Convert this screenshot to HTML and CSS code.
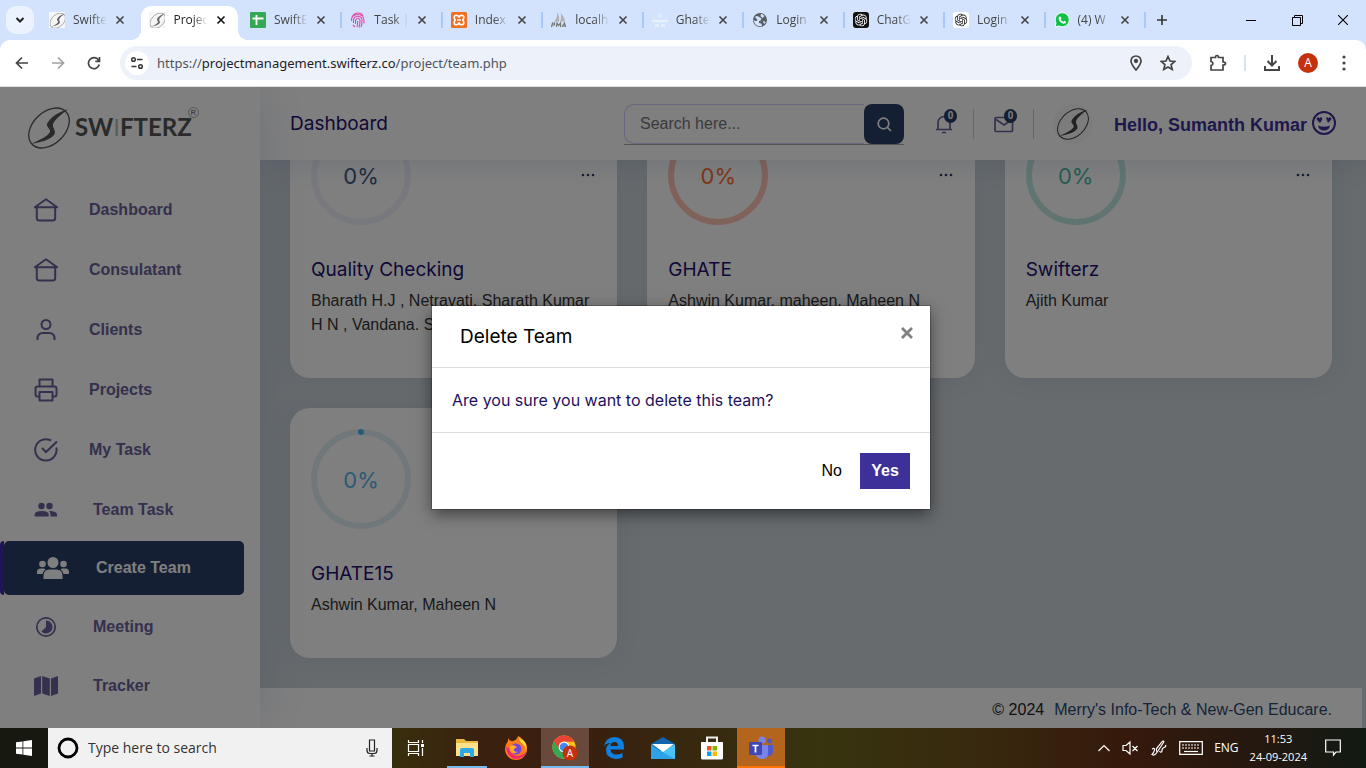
FILE: index.html
```html
<!DOCTYPE html>
<html lang="en">
<head>
<meta charset="utf-8">
<title>Project Management</title>
<link rel="stylesheet" href="styles.css">
</head>
<body>
<svg class="sprite" aria-hidden="true">
  <symbol id="x" viewBox="0 0 10 10"><path d="M1.500 1.500l7 7M8.500 1.500l-7 7" fill="none" stroke="currentColor" stroke-width="1.600"/></symbol>
  <symbol id="mark" viewBox="0 0 42 42"><ellipse cx="21" cy="21" rx="23.500" ry="16" transform="rotate(-44 21 21)" fill="none" stroke="currentColor" stroke-width="1.300"/><path d="M40 2C31 5 22 10 19 17c-1 3 4 5 3 8-3 5-11 8-19 12 10-2 19-4 23-9 3-4-2-7-1-11 2-5 9-10 15-15z" fill="currentColor"/></symbol>
  <symbol id="home" viewBox="0 0 24 24"><path d="M.8 9.200L12 1.200l11.200 8zM2.800 9v11q0 2.500 2.500 2.500h13.400q2.500 0 2.500-2.500V9" fill="none" stroke="currentColor" stroke-width="2" stroke-linejoin="round"/></symbol>
  <symbol id="dots" viewBox="0 0 14 4"><circle cx="2" cy="2" r="1.300"/><circle cx="7" cy="2" r="1.300"/><circle cx="12" cy="2" r="1.300"/></symbol>
  <symbol id="knot" viewBox="0 0 24 24"><path fill="currentColor" d="M22.2819 9.8211a5.9847 5.9847 0 0 0-.5157-4.9108 6.0462 6.0462 0 0 0-6.5098-2.9A6.0651 6.0651 0 0 0 4.9807 4.1818a5.9847 5.9847 0 0 0-3.9977 2.9 6.0462 6.0462 0 0 0 .7427 7.0966 5.98 5.98 0 0 0 .511 4.9107 6.051 6.051 0 0 0 6.5146 2.9001A5.9847 5.9847 0 0 0 13.2599 24a6.0557 6.0557 0 0 0 5.7718-4.2058 5.9894 5.9894 0 0 0 3.9977-2.9001 6.0557 6.0557 0 0 0-.7475-7.0729zm-9.022 12.6081a4.4755 4.4755 0 0 1-2.8764-1.0408l.1419-.0804 4.7783-2.7582a.7948.7948 0 0 0 .3927-.6813v-6.7369l2.02 1.1686a.071.071 0 0 1 .038.052v5.5826a4.504 4.504 0 0 1-4.4945 4.4944zm-9.6607-4.1254a4.4708 4.4708 0 0 1-.5346-3.0137l.142.0852 4.783 2.7582a.7712.7712 0 0 0 .7806 0l5.8428-3.3685v2.3324a.0804.0804 0 0 1-.0332.0615L9.74 19.9502a4.4992 4.4992 0 0 1-6.1408-1.6464zM2.3408 7.8956a4.485 4.485 0 0 1 2.3655-1.9728V11.6a.7664.7664 0 0 0 .3879.6765l5.8144 3.3543-2.0201 1.1685a.0757.0757 0 0 1-.071 0l-4.8303-2.7865A4.504 4.504 0 0 1 2.3408 7.872zm16.5963 3.8558L13.1038 8.364 15.1192 7.2a.0757.0757 0 0 1 .071 0l4.8303 2.7913a4.4944 4.4944 0 0 1-.6765 8.1042v-5.6772a.79.79 0 0 0-.407-.667zm2.0107-3.0231l-.142-.0852-4.7735-2.7818a.7759.7759 0 0 0-.7854 0L9.409 9.2297V6.8974a.0662.0662 0 0 1 .0284-.0615l4.8303-2.7866a4.4992 4.4992 0 0 1 6.6802 4.66zM8.3065 12.863l-2.02-1.1638a.0804.0804 0 0 1-.038-.0567V6.0742a4.4992 4.4992 0 0 1 7.3757-3.4537l-.142.0805L8.704 5.459a.7948.7948 0 0 0-.3927.6813zm1.0976-2.3654l2.602-1.4998 2.6069 1.4998v2.9994l-2.5974 1.4997-2.6067-1.4997Z"/></symbol>
</svg>

<div class="tabstrip">
  <button class="tab-search" aria-label="Search tabs"><svg width="12" height="12" viewBox="0 0 12 12"><path d="M2.500 4L6 7.500 9.500 4" fill="none" stroke="#222" stroke-width="2"/></svg></button>
  <div class="tabs">
    <div class="tab"><svg class="fav fav-white" viewBox="-2 -2 46 46"><use href="#mark"/></svg><span class="tab-title">Swifte</span><button class="tab-x" aria-label="Close tab"><svg><use href="#x"/></svg></button></div>
    <div class="tab active"><svg class="fav fav-white" viewBox="-2 -2 46 46"><use href="#mark"/></svg><span class="tab-title">Projec</span><button class="tab-x" aria-label="Close tab"><svg><use href="#x"/></svg></button></div>
    <div class="tab"><svg class="fav" viewBox="0 0 16 16"><rect width="16" height="16" rx="1" fill="#34a853"/><path d="M2.500 6.500h11M6.500 3v10" stroke="#fff" stroke-width="1.800"/></svg><span class="tab-title">SwiftE</span><button class="tab-x" aria-label="Close tab"><svg><use href="#x"/></svg></button></div>
    <div class="tab"><svg class="fav" viewBox="0 0 16 16" fill="none" stroke="#e048a8" stroke-width="1.100"><path d="M2 5Q4 1 8 1t5 3M1.500 9V8q0-5 6-5.500 7 0 6.500 7v2M3.500 11V8q0-3.500 4.500-3.500T12 9q0 4-1 6M5.500 12V8.500Q6 6.500 8 6.500t2 2q0 4-1 7M7.700 9q0 3-.7 6M3 13l2 2"/></svg><span class="tab-title">Task |</span><button class="tab-x" aria-label="Close tab"><svg><use href="#x"/></svg></button></div>
    <div class="tab"><svg class="fav" viewBox="0 0 16 16"><rect width="16" height="16" rx="1.500" fill="#f07020"/><path d="M8 5.500Q7.500 3.300 5.500 3.200 3.200 3.200 3.200 5.300q0 1.700 1 2.700-1 1-1 2.700 0 2.100 2.300 2.100 2-.1 2.500-2.300.5 2.200 2.500 2.300 2.300 0 2.300-2.100 0-1.700-1-2.700 1-1 1-2.700 0-2.100-2.300-2.100Q8.500 3.300 8 5.500zM6 8h4" fill="none" stroke="#fff" stroke-width="1.600"/></svg><span class="tab-title">Index</span><button class="tab-x" aria-label="Close tab"><svg><use href="#x"/></svg></button></div>
    <div class="tab"><svg class="fav" viewBox="0 0 16 16"><path d="M6 0Q7 6 3 9.500h5q1-4-2-9.500zM9.500 1Q11 6 9 9.500h5Q13 4 9.500 1z" fill="#b0b0b0"/><path d="M.5 15l1-4h2v2h-2M5.500 15l.5-4 1.500 2.500 2-2.500v4M11 15l2.500-4 1 4M11.500 14h3" fill="none" stroke="#777" stroke-width="1.200"/></svg><span class="tab-title">localh</span><button class="tab-x" aria-label="Close tab"><svg><use href="#x"/></svg></button></div>
    <div class="tab"><svg class="fav" viewBox="0 0 16 16" opacity=".7"><path d="M7 2h3v3H7z" fill="#e8f0ff"/><path d="M0 9h16M3 13.500h4M9 13.500h4" stroke="#f2f6ff" stroke-width="2.500"/></svg><span class="tab-title">Ghate</span><button class="tab-x" aria-label="Close tab"><svg><use href="#x"/></svg></button></div>
    <div class="tab"><svg class="fav" viewBox="0 0 16 16"><circle cx="8" cy="8" r="7" fill="#5b5e63"/><path d="M3 5q2-2 4 0l2 1q1 3-2 3v2q3 0 3 3-4 1-7-2L1.500 8q3 2 4 0zM9 2q2 0 3.500 2l-2 2-2-2zM11 9l3 1-2 2z" fill="#d3e3fd"/></svg><span class="tab-title">Login</span><button class="tab-x" aria-label="Close tab"><svg><use href="#x"/></svg></button></div>
    <div class="tab"><svg class="fav fav-black" viewBox="-2 -2 20 20"><use href="#knot" width="16" height="16"/></svg><span class="tab-title">ChatG</span><button class="tab-x" aria-label="Close tab"><svg><use href="#x"/></svg></button></div>
    <div class="tab"><svg class="fav fav-round" viewBox="-2 -2 20 20"><use href="#knot" width="16" height="16"/></svg><span class="tab-title">Login</span><button class="tab-x" aria-label="Close tab"><svg><use href="#x"/></svg></button></div>
    <div class="tab"><svg class="fav" viewBox="0 0 16 16"><path d="M1 15l1-4a7 7 0 1 1 3 3z" fill="#0dc143" stroke="#fff"/><path d="M5.500 4.500l1.300.2.700 1.800-.8 1q1 1.700 2.700 2.300l.9-1 1.800.9q0 2-2.300 2-3.800-.7-5.300-4.800 0-1.700 1-2.400z" fill="#fff"/></svg><span class="tab-title">(4) W</span><button class="tab-x" aria-label="Close tab"><svg><use href="#x"/></svg></button></div>
  </div>
  <button class="new-tab" aria-label="New tab"><svg width="12" height="12" viewBox="0 0 12 12"><path d="M6 1v10M1 6h10" stroke="#333" stroke-width="1.600"/></svg></button>
  <div class="window-controls">
    <button aria-label="Minimize"><svg width="10" height="10" viewBox="0 0 10 10"><path d="M0 5.500h10" stroke="#000"/></svg></button>
    <button aria-label="Restore"><svg width="11" height="11" viewBox="0 0 11 11"><path d="M.5 2.500h8v8h-8zM2.500 2.500v-2h8v8h-2" fill="none" stroke="#000"/></svg></button>
    <button aria-label="Close"><svg width="10" height="10" viewBox="0 0 10 10"><path d="M0 0l10 10M10 0L0 10" stroke="#000" stroke-width="1.100"/></svg></button>
  </div>
</div>

<div class="toolbar">
  <button class="tool" aria-label="Back"><svg width="14" height="14" viewBox="0 0 14 14"><path d="M13 7H2M7 1.500L1.500 7 7 12.500" /></svg></button>
  <button class="tool faded" aria-label="Forward"><svg width="14" height="14" viewBox="0 0 14 14"><path d="M1 7h11M7 1.500L12.500 7 7 12.500"/></svg></button>
  <button class="tool" aria-label="Reload"><svg width="14" height="14" viewBox="0 0 14 14"><path d="M12.300 8.500A5.500 5.500 0 1 1 11.500 4l1 1.200M12.500 1v4.300H8.300"/></svg></button>
  <div class="omnibox">
    <button class="site-info" aria-label="Site information"><svg width="14" height="14" viewBox="0 0 14 14" fill="none" stroke="#333" stroke-width="1.500"><circle cx="3.500" cy="3.500" r="1.800"/><path d="M7 3.500h5.500M1.500 10.500h5"/><circle cx="10.500" cy="10.500" r="1.800"/></svg></button>
    <div class="url">https://<b>projectmanagement.swifterz.co</b>/project/team.php</div>
    <button class="tool" aria-label="Location"><svg width="14" height="16" viewBox="0 0 14 16"><path d="M7 15Q2 9 2 6a5 5 0 0 1 10 0q0 3-5 9z"/><circle cx="7" cy="6" r="1.300" fill="#444"/></svg></button>
    <button class="tool" aria-label="Bookmark"><svg width="16" height="16" viewBox="0 0 16 16"><path d="M8 1.500l2 4.500 4.800.4-3.700 3.200 1.100 4.800L8 11.900l-4.200 2.500 1.100-4.800L1.200 6.400 6 6z"/></svg></button>
  </div>
  <button class="tool ext" aria-label="Extensions"><svg width="18" height="18" viewBox="0 0 18 18"><path d="M2 3.500h4.500q0-2 1.500-2t1.500 2H14V8q2.500 0 2.500 1.500T14 11v5H2v-4.500q2-.5 2-2t-2-2z" stroke-width="1.700"/></svg></button>
  <span class="tool-sep"></span>
  <button class="tool download" aria-label="Downloads"><svg width="18" height="18" viewBox="0 0 18 18"><path d="M9 1v10M4.500 7L9 11.500 13.500 7M2 12v4h14v-4" stroke-width="2"/></svg></button>
  <button class="profile">A</button>
  <button class="tool more" aria-label="Menu"><svg width="4" height="16" viewBox="0 0 4 16"><g fill="#444" stroke="none"><circle cx="2" cy="2" r="1.600"/><circle cx="2" cy="8" r="1.600"/><circle cx="2" cy="14" r="1.600"/></g></svg></button>
</div>

<div class="page">
  <aside class="sidebar">
    <a class="logo" href="#"><svg class="logo-mark" viewBox="0 0 42 42"><use href="#mark"/></svg><span class="logo-text">SW<i>I</i>FTERZ</span><span class="logo-reg">R</span></a>
    <nav>
      <a class="item" href="#"><svg><use href="#home"/></svg>Dashboard</a>
      <a class="item" href="#"><svg><use href="#home"/></svg>Consulatant</a>
      <a class="item" href="#"><svg viewBox="0 0 24 24" fill="none" stroke="currentColor" stroke-width="2"><circle cx="12" cy="6.500" r="4.500"/><path d="M3.500 22v-1.500q0-5.500 5.500-5.500h6q5.500 0 5.500 5.500V22"/></svg>Clients</a>
      <a class="item" href="#"><svg viewBox="0 0 24 24" fill="none" stroke="currentColor" stroke-width="2" stroke-linejoin="round"><path d="M5.500 8.500V1.500h13v7M5.500 18.500h-2q-2 0-2-2v-6q0-2 2-2h17q2 0 2 2v6q0 2-2 2h-2M5.500 14h13v8.500h-13z"/></svg>Projects</a>
      <a class="item" href="#"><svg viewBox="0 0 24 24" fill="none" stroke="currentColor" stroke-width="2"><path d="M22.300 9.500A10.700 10.700 0 1 1 17 2.500M8 10l4 4L23 3.500"/></svg>My Task</a>
      <a class="item solid" href="#"><svg viewBox="0 0 24 24" fill="currentColor"><circle cx="7.500" cy="8" r="3.200"/><circle cx="15.500" cy="8" r="3.200"/><path d="M.7 18.500v-2q0-3.500 7-3.500t7 3.500v2zM15 13q8 0 8 3.500v2h-6.500v-2q0-2-1.500-3.500z"/></svg>Team Task</a>
      <a class="item current" href="#"><svg viewBox="0 0 32 24" fill="currentColor"><circle cx="16" cy="6.500" r="5.500"/><circle cx="5.500" cy="8" r="3.300"/><circle cx="26.500" cy="8" r="3.300"/><path d="M6.500 23v-3q0-6.500 6-6.500h7q6 0 6 6.500v3zM0 18v-2q0-3.500 3.500-3.500h3q1 0 2 1Q6 15 5.500 18zM32 18v-2q0-3.500-3.500-3.500h-3q-1 0-2 1Q26 15 26.500 18z"/></svg>Create Team</a>
      <a class="item solid" href="#"><svg viewBox="0 0 24 24"><circle cx="12" cy="12" r="9.200" fill="none" stroke="currentColor" stroke-width="1.700"/><path d="M12 12V5.500a6.500 6.500 0 1 1-4.600 11.100z" fill="currentColor"/></svg>Meeting</a>
      <a class="item solid" href="#"><svg viewBox="0 0 24 24" fill="currentColor"><path d="M0 4.500l7-2.500v17.500L0 22zM8.200 2l7.600 2.500V22l-7.600-2.500zM17 4.500L24 2v17.500L17 22z"/></svg>Tracker</a>
    </nav>
  </aside>

  <div class="main">
    <header class="topbar">
      <h1>Dashboard</h1>
      <form class="search">
        <input type="search" aria-label="Search" placeholder="Search here...">
        <button type="button" aria-label="Search"><svg width="16" height="16" viewBox="0 0 16 16"><circle cx="7.500" cy="7.500" r="5.300" fill="none" stroke="#fff" stroke-width="1.700"/><path d="M11.500 11.500l3.500 3.500" stroke="#fff" stroke-width="1.700"/></svg></button>
      </form>
      <button class="alert" aria-label="Notifications"><svg width="20" height="20" viewBox="0 0 20 20" fill="none" stroke="currentColor" stroke-width="1.700"><path d="M2 15.500h16M4 15V8.500a6 6 0 0 1 12 0V15M8 18.500h4"/></svg><span class="badge">0</span></button>
      <button class="alert" aria-label="Messages"><svg width="20" height="20" viewBox="0 0 20 20" fill="none" stroke="currentColor" stroke-width="1.700"><rect x="1" y="3.500" width="17.500" height="14" rx="1"/><path d="M2 5.500l8 5.500 8-5.500"/></svg><span class="badge">0</span></button>
      <span class="avatar"><svg viewBox="0 0 42 42"><use href="#mark"/></svg></span>
      <a class="hello" href="#">Hello, Sumanth Kumar <svg width="26" height="26" viewBox="0 0 26 26"><circle cx="13" cy="12" r="11" fill="none" stroke="currentColor" stroke-width="2"/><path d="M9 12L6 9Q5 6.500 7 6.200q1 0 1.500 1Q9.500 5.500 11 6.800q1 1.500-2 5.200zM17 12l-2-5.200q1.500-1.300 2.500.4.500-1 1.500-1 2 .3 1 2.800zM7 14.500q6 2.500 12 0-1 5-6 5t-6-5z" fill="currentColor"/></svg></a>
    </header>
    <main class="cards">
      <article class="card violet">
        <div class="card-top"><div class="ring">0%</div><button aria-label="Options"><svg><use href="#dots"/></svg></button></div>
        <h2>Quality Checking</h2>
        <p>Bharath H.J , Netravati, Sharath Kumar H N , Vandana. S</p>
      </article>
      <article class="card orange">
        <div class="card-top"><div class="ring">0%</div><button aria-label="Options"><svg><use href="#dots"/></svg></button></div>
        <h2>GHATE</h2>
        <p>Ashwin Kumar, maheen, Maheen N</p>
      </article>
      <article class="card teal">
        <div class="card-top"><div class="ring">0%</div><button aria-label="Options"><svg><use href="#dots"/></svg></button></div>
        <h2>Swifterz</h2>
        <p>Ajith Kumar</p>
      </article>
      <article class="card blue">
        <div class="card-top"><div class="ring">0%<span class="ring-dot"></span></div></div>
        <h2>GHATE15</h2>
        <p>Ashwin Kumar, Maheen N</p>
      </article>
    </main>
    <footer class="footer"><span>© 2024</span><a href="#">Merry's Info-Tech &amp; New-Gen Educare.</a></footer>
  </div>

  <div class="backdrop">
    <section class="modal" role="dialog" aria-labelledby="modal-title">
      <div class="modal-head"><h3 id="modal-title">Delete Team</h3><button aria-label="Close"><svg width="14" height="14" viewBox="0 0 14 14"><path d="M2 2l10 10M12 2L2 12" stroke="#808080" stroke-width="2.800"/></svg></button></div>
      <p class="modal-body">Are you sure you want to delete this team?</p>
      <div class="modal-foot"><button class="no">No</button><button class="yes">Yes</button></div>
    </section>
  </div>
</div>

<div class="taskbar">
  <button class="start" aria-label="Start"><svg width="16" height="16" viewBox="0 0 16 16" fill="#fff"><path d="M0 2.300L6.500 1.400v6.200H0zM7.300 1.300L16 0v7.600H7.300zM0 8.400h6.500v6.200L0 13.700zM7.300 8.400H16V16l-8.700-1.300z"/></svg></button>
  <div class="task-search">
    <svg width="22" height="22" viewBox="0 0 22 22"><circle cx="11" cy="11" r="9" fill="none" stroke="#000" stroke-width="2.800"/></svg>
    <input type="text" aria-label="Type here to search" placeholder="Type here to search">
    <svg width="12" height="18" viewBox="0 0 12 18" fill="none" stroke="#222" stroke-width="1.200"><path d="M3.500 1h5v11h-5zM1 9v2.500Q1 14.500 4 14.500h4q3 0 3-3V9M6 14.500V17M3.500 17h5"/></svg>
  </div>
  <button class="app task-view" aria-label="Task view"><svg width="18" height="18" viewBox="0 0 18 18" fill="none" stroke="#fff" stroke-width="1.200"><path d="M1.500 1v2.500h10V1M1.500 17v-2.500h10V17M1.500 5.500h10v7h-10zM15.500 1v3M15.500 9v8"/><path d="M14 5h3v3h-3z" fill="#fff" stroke="none"/></svg></button>
  <button class="app running" aria-label="File Explorer"><svg width="22" height="20" viewBox="0 0 22 20"><path d="M0 1h8l2 2h12v15H0z" fill="#e8b93c"/><path d="M0 5h22v13H0z" fill="#fde18c"/><path d="M4 19v-7q0-2 2-2h10q2 0 2 2v7h-4v-4H8v4z" fill="#2da7e8"/></svg></button>
  <button class="app" aria-label="Firefox"><svg width="24" height="24" viewBox="0 0 24 24"><path d="M4 5Q1 9 1 13a11 11 0 0 0 22 0q0-6-4-9Q17 1 14 0q-1 4-5 5Q6 6 4 2z" fill="#ff7a1a"/><path d="M15 1q0 5 4 7 3 3 3 8 2-8-3-12-3-1-4-3z" fill="#ffd83b"/><path d="M2 11q1 10 9 12 9 0 11-7-4 4-9 4-7-1-8-8z" fill="#f0286c"/><circle cx="12" cy="13" r="5.500" fill="#7545d8"/><path d="M6 10q4-2 7 1l-3 2q-1 3 4 3-6 3-8-2z" fill="#ffae25"/></svg></button>
  <button class="app running selected" aria-label="Chrome"><svg width="26" height="26" viewBox="0 0 26 26"><circle cx="12" cy="12" r="11.500" fill="#fbc116"/><path d="M12 12L2 6.200A11.500 11.500 0 0 0 12 23.500l4.500-8.500z" fill="#34a853"/><path d="M12 6.800h10.300A11.500 11.500 0 0 0 2 6.200L7.500 14.500z" fill="#ea4335"/><circle cx="12" cy="12" r="5.400" fill="#fff"/><circle cx="12" cy="12" r="4.300" fill="#4285f4"/><circle cx="18" cy="18" r="7.500" fill="#c5300d"/><text x="18" y="22" text-anchor="middle" fill="#fff" font-family="Open Sans, sans-serif" font-size="10">A</text></svg></button>
  <button class="app" aria-label="Edge"><svg width="22" height="22" viewBox="0 0 22 22"><path d="M1 10Q2 1 11 0q10 0 10 10v2.500H7.500q.5 5 6 5 3 0 6-1.500v4.500Q16 22 12.500 22 3 21 3 13q0-5 5-7-6 0-7 4zM7.500 9h7.500q0-4-3.500-4t-4 4z" fill="#0f7fe0"/></svg></button>
  <button class="app" aria-label="Mail"><svg width="24" height="22" viewBox="0 0 24 22"><path d="M0 7L12 0l12 7v15H0z" fill="#0f65ad"/><path d="M0 7.500L12 16 24 7.500V22H0z" fill="#2ba2ea"/><path d="M24 7.500V22L9 14z" fill="#49c2f6"/><path d="M1 7h22L12 15z" fill="#fff"/></svg></button>
  <button class="app" aria-label="Store"><svg width="22" height="24" viewBox="0 0 22 24"><path d="M6 6V1.500h10V6" fill="none" stroke="#eee" stroke-width="2"/><path d="M0 6h22v16q0 1.500-1.500 1.500h-19Q0 23.500 0 22z" fill="#fff"/><path d="M6 10h4.500v4.500H6z" fill="#f25022"/><path d="M11.500 10H16v4.500h-4.500z" fill="#7fba00"/><path d="M6 15.500h4.500V20H6z" fill="#00a4ef"/><path d="M11.500 15.500H16V20h-4.500z" fill="#ffb900"/></svg></button>
  <button class="app alerting" aria-label="Teams"><svg width="24" height="24" viewBox="0 0 24 24"><circle cx="13" cy="4" r="3.500" fill="#7b83eb"/><circle cx="20.500" cy="5" r="2.500" fill="#5059c9"/><path d="M15 9h9v6q0 5-5 5z" fill="#5059c9"/><path d="M7 9h12v8q0 6-6 6t-6-5z" fill="#7b83eb"/><rect y="6" width="13" height="13" rx="1" fill="#4048b5"/><path d="M3.500 9.500h6M6.500 9.500v7" stroke="#fff" stroke-width="1.700"/></svg></button>
  <div class="tray">
    <button aria-label="Hidden icons"><svg width="14" height="10" viewBox="0 0 14 10"><path d="M1.500 8L7 2.500 12.500 8"/></svg></button>
    <button aria-label="Volume"><svg width="17" height="14" viewBox="0 0 17 14"><path d="M1 4.500h3L8 1v12L4 9.500H1zM10.500 5l5 5M15.500 5l-5 5"/></svg></button>
    <button aria-label="Ink"><svg width="18" height="18" viewBox="0 0 18 18"><path d="M2 10q3-1.500 2.500 1T2 15.500q2.500 1.500 4.500-1.500l7-10.500q1-2-1-1.300L6.500 9.500q-.5 2 .5 3.500M9.500 12q1.500 2.500 2.500 0-.5-2.500 2-3.500t1.500-2.500"/></svg></button>
    <button aria-label="Keyboard"><svg width="24" height="14" viewBox="0 0 24 14"><path d="M.7.700h22.600v12.600H.7z"/><path d="M3 4h18M3 7h18" stroke-dasharray="2 1"/><path d="M5 10.500h14"/></svg></button>
    <button class="lang">ENG</button>
    <time>11:53<br>24-09-2024</time>
    <button aria-label="Action center"><svg width="16" height="18" viewBox="0 0 16 18"><path d="M.7 1h14.600v12H11l-2.500 3V13H.7z"/></svg></button>
  </div>
</div>
</body>
</html>
```

FILE: styles.css
```css
* { box-sizing: border-box; }
body { margin: 0; min-height: 100vh; display: flex; flex-direction: column; font: 16px/24px "Liberation Sans", Arial, sans-serif; overflow: hidden; background: #d3e3fd; }
button { border: 0; padding: 0; margin: 0; background: none; font: inherit; color: inherit; display: flex; align-items: center; justify-content: center; }
a { color: inherit; text-decoration: none; }
h1, h2, h3, p { margin: 0; }
svg { display: block; flex: none; }
.sprite { position: absolute; width: 0; height: 0; }

/* browser tabs */
.tabstrip { height: 40px; display: flex; color: #444; font: 12px/16px "Open Sans", sans-serif; }
.tab-search { width: 28px; height: 28px; margin: 6px 7px 6px 6px; border-radius: 10px; background: #ecf3fe; }
.tabs { flex: 0 1 1105px; display: flex; min-width: 0; }
.tab { flex: 1 1 0; min-width: 0; display: flex; align-items: center; padding: 0 16px 0 8px; background: linear-gradient(#a8c7fa, #a8c7fa) right / 2px 16px no-repeat; }
.tab:first-child { background: none; }
.tab.active { position: relative; background: #fff; border-radius: 10px 10px 0 0; margin: 6px 4px 0 0; padding: 0 12px 6px 8px; color: #222; }
.tab.active::before, .tab.active::after { content: ""; position: absolute; bottom: 0; width: 10px; height: 10px; }
.tab.active::before { right: 100%; background: radial-gradient(circle at 0 0, transparent 10px, #fff 10px); }
.tab.active::after { left: 100%; background: radial-gradient(circle at 100% 0, transparent 10px, #fff 10px); }
.tab.active .tab-x { color: #111; }
.fav { width: 16px; height: 16px; margin-right: 8px; }
.fav-white { background: #f6f6f6; color: #666; }
.fav-black { background: #111; color: #fff; border-radius: 3px; }
.fav-round { background: #fff; color: #222; border-radius: 3px; }
.tab-title { flex: 1; white-space: nowrap; overflow: hidden; -webkit-mask-image: linear-gradient(90deg, #000 45%, transparent 80%); mask-image: linear-gradient(90deg, #000 45%, transparent 80%); }
.tab-x svg { width: 10px; height: 10px; }
.new-tab { width: 32px; }
.window-controls { display: flex; margin-left: auto; }
.window-controls button { width: 46px; }

/* address bar */
.toolbar { height: 47px; display: flex; align-items: center; padding: 0 7px 1px 4px; border-bottom: 1px solid #dde1e1; border-radius: 10px 10px 0 0; background: #fff; }
.tool { width: 36px; height: 34px; }
.tool svg { fill: none; stroke: #444; stroke-width: 1.7; }
.faded { opacity: .5; }
.omnibox { flex: 1; height: 34px; display: flex; align-items: center; margin: 0 8px; padding: 0 8px 0 5px; border-radius: 17px; background: #ecf1fa; }
.omnibox .tool { width: 32px; }
.site-info { width: 24px; height: 24px; border-radius: 12px; background: #fff; }
.url { flex: 1; padding-left: 8px; font: 13px/20px "Noto Sans", sans-serif; color: #50545a; }
.url b { font-weight: 400; color: #1f1f1f; }
.tool-sep { width: 2px; height: 16px; margin: 0 8px; background: #d3e3fd; }
.profile { width: 20px; height: 20px; margin-left: 8px; border-radius: 10px; background: #c5300d; color: #fff; font: 12px/20px "Open Sans", sans-serif; }
.more { width: 30px; margin-left: 11px; }

/* application */
.page { flex: 1; min-height: 0; display: flex; position: relative; overflow: hidden; background: #ced6dc; }
.sidebar { width: 260px; flex: none; background: #fff; box-shadow: 0 0 50px rgba(61, 96, 153, .16); position: relative; z-index: 3; }
.logo { height: 93px; padding: 20px 0 0 28px; display: flex; align-items: flex-start; color: #555; }
.logo-mark { width: 42px; height: 42px; }
.logo-text { margin-left: 5px; font: 700 24px/40px Lato, sans-serif; }
.logo-text i { font-style: normal; font-weight: 400; color: #bbb; }
.logo-reg { width: 11px; height: 11px; border: 1px solid #aaa; border-radius: 6px; margin-left: -4px; text-align: center; font: 7px/9px "Liberation Sans", sans-serif; }
.item { height: 60px; display: flex; align-items: center; padding-left: 34px; gap: 31px; font-weight: 700; color: #6a609c; }
.item.solid { height: 59px; gap: 35px; }
.item svg { width: 24px; height: 24px; }
.item.current { position: relative; height: 54px; margin: 2px 16px 2px 4px; padding-left: 33px; gap: 27px; border-radius: 5px; background: #2a3e66; color: #fff; }
.item.current::before { content: ""; position: absolute; top: 0; bottom: 0; right: 100%; width: 4px; border-radius: 4px 0 0 4px; background: #3d2ba8; }
.item.current svg { width: 32px; }
.main { flex: 1; min-width: 0; display: flex; flex-direction: column; overflow: hidden; }
.topbar { height: 73px; flex: none; display: flex; align-items: center; padding: 0 29px 0 30px; background: #fff; position: relative; z-index: 2; box-shadow: 0 0 30px rgba(61, 96, 153, .18); }
h1, h2, h3 { font: 400 19px/24px Inter, sans-serif; color: #1e1070; }
.search { display: flex; width: 280px; height: 41px; margin: 1px 22px 0 auto; border-bottom: 1px solid #aaa; }
.search input { flex: 1; min-width: 0; height: 40px; padding: 0 15px; border: 1px solid #cdcdfa; border-right: 0; border-radius: 10px 0 0 10px; font: inherit; outline: 0; background: #fff; }
.search input::placeholder { color: #777; }
.search button { width: 40px; height: 40px; border-radius: 8px; background: #2a3e66; }
.alert { position: relative; width: 48px; height: 30px; padding-right: 10px; border-right: 1px solid #ccc; color: #6a609c; }
.alert + .alert { margin-left: 12px; }
.badge { position: absolute; top: 0; right: 16px; width: 13px; height: 14px; border-radius: 7px; background: #2a3e66; color: #fff; font: 700 10px/14px "Liberation Sans", sans-serif; text-align: center; }
.avatar { width: 40px; height: 40px; margin: 0 21px 0 19px; padding: 4px; border-radius: 20px; background: #f8f8f8; color: #444; }
.avatar svg { width: 32px; height: 32px; }
.hello { display: flex; align-items: flex-end; gap: 4px; font-size: 18px; font-weight: 700; color: #3d3199; }
.cards { flex: none; display: grid; grid-template-columns: repeat(3, minmax(0, 1fr)); gap: 30px; margin-top: -56px; padding: 0 34px 30px 30px; }
.card { padding: 21px 22px 41px 21px; border-radius: 20px; background: #fff; box-shadow: 0 0 25px rgba(61, 96, 153, .1); }
.card-top { display: flex; align-items: center; justify-content: space-between; margin-bottom: 33px; }
.card-top svg { width: 14px; height: 4px; fill: #2a3e66; }
.card h2 { margin-bottom: 7px; }
.card p { color: #333; }
.ring { position: relative; width: 100px; height: 100px; display: flex; align-items: center; justify-content: center; padding-top: 2px; border: 6px solid; border-radius: 50%; font: 22px/28px Inter, sans-serif; }
.ring-dot { position: absolute; top: -6px; left: 41px; width: 6px; height: 6px; border-radius: 3px; background: #52b4f0; }
.violet .ring { border-color: #f0f0ff; color: #3e5a80; }
.orange .ring { border-color: #ffc4b3; color: #ff6b2d; }
.teal .ring { border-color: #c0ebe3; color: #4bbda8; }
.blue .ring { border-color: #e2f1f8; color: #5ab4ec; }
.footer { flex: 1 0 40px; display: flex; align-items: flex-start; justify-content: flex-end; gap: 10px; margin-right: 4px; padding: 10px 30px 0; background: #fff; color: #222; }
.footer a { color: #2e4870; }

/* confirmation dialog */
.backdrop { position: absolute; inset: 0; z-index: 5; display: flex; align-items: center; justify-content: center; padding-right: 4px; background: rgba(0, 0, 0, .5); }
.modal { width: 498px; background: #fff; box-shadow: 0 0 0 1px rgba(0, 0, 0, .2), 0 5px 15px rgba(0, 0, 0, .5); }
.modal-head { display: flex; justify-content: space-between; align-items: flex-start; padding: 19px 16px 18px 28px; border-bottom: 1px solid #dedede; }
.modal-head button { margin-top: 1px; }
.modal-head h3 { color: #000; }
.modal-body { padding: 20px; border-bottom: 1px solid #dedede; font: 16px/24px Inter, sans-serif; color: #1e1060; }
.modal-foot { display: flex; justify-content: flex-end; gap: 18px; padding: 20px; }
.modal-foot button { height: 36px; }
.yes { width: 50px; background: #3d3199; color: #fff; font-weight: 700; }

/* desktop taskbar */
.taskbar { height: 40px; display: flex; color: #fff; background: linear-gradient(90deg, #171810 0, #171810 48px, #382f0c 392px, #3a200f 480px, #38200f 600px, #37340f 820px, #38290e 980px, #35190c 1130px, #241810 1260px, #101a12); }
.start, .app { width: 48px; }
.task-search { width: 344px; display: flex; align-items: center; padding: 0 14px 0 9px; background: #f1f1f1; }
.task-search input { flex: 1; min-width: 0; border: 0; padding: 0 9px; background: none; font: 14px/20px "Open Sans", sans-serif; outline: 0; }
.task-search input::placeholder { color: #333; }
.app { margin-right: 1px; border-top: 2px solid transparent; border-bottom: 2px solid transparent; }
.task-view { margin-right: 3px; }
.running { background: linear-gradient(#76b9ed, #76b9ed) center bottom / 40px 2px no-repeat border-box; }
.selected { background: linear-gradient(#76b9ed, #76b9ed) bottom / 100% 2px no-repeat border-box, #68493c border-box; }
.alerting { background: #b3651d border-box; border-bottom-color: #ff7300; }
.tray { margin-left: auto; display: flex; align-items: center; gap: 11px; padding-right: 25px; font: 12px/18px "Open Sans", sans-serif; }
.tray svg { fill: none; stroke: #fff; stroke-width: 1.2; }
.tray time { margin-right: 7px; text-align: center; font-size: 11px; }
```
